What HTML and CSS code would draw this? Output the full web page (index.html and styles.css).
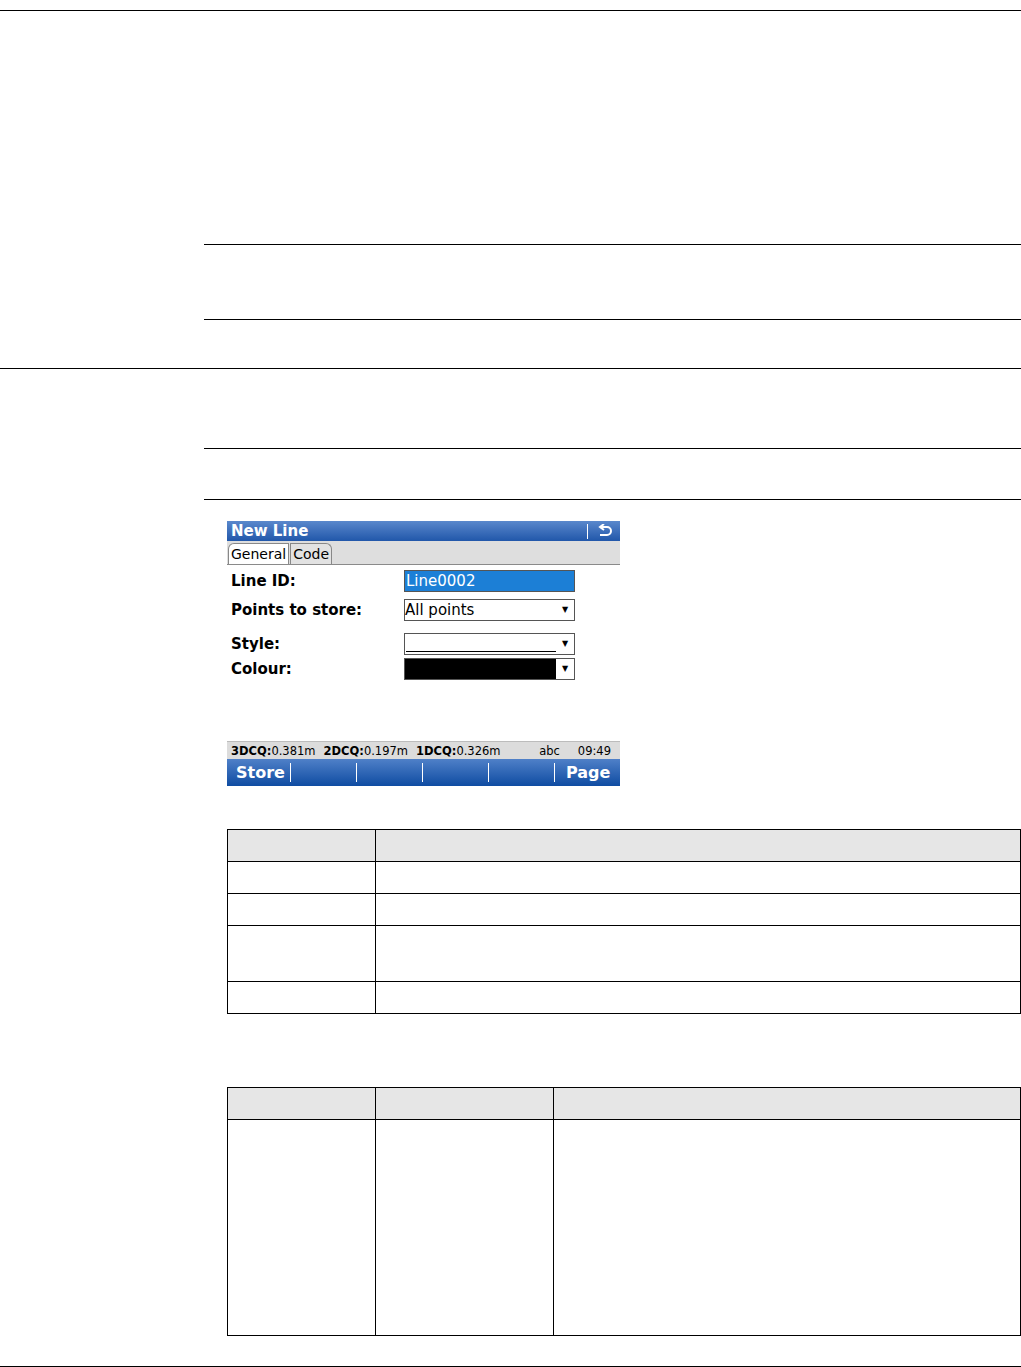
FILE: index.html
```html
<!DOCTYPE html>
<html lang="en">
<head>
  <meta charset="UTF-8" />
  <title>New Line</title>
  <link rel="stylesheet" href="styles.css">
</head>
<body>

<div class="rule full top"></div>
<div class="gap g1"></div>
<div class="rule indent"></div>
<div class="gap g2"></div>
<div class="rule indent"></div>
<div class="gap g3"></div>
<div class="rule full"></div>
<div class="gap g4"></div>
<div class="rule indent"></div>
<div class="gap g5"></div>
<div class="rule indent"></div>

<div class="device">
  <div class="title-bar">
    <span class="title">New Line</span>
    <span class="title-sep"></span>
    <svg class="back-icon" width="16" height="14" viewBox="0 0 16 14">
      <path d="M4 3 H10 A4 4 0 0 1 10 11 H3" fill="none" stroke="#fff" stroke-width="2"/>
      <path d="M7 0 L3 3 L7 6" fill="none" stroke="#fff" stroke-width="2"/>
    </svg>
  </div>
  <div class="tabs">
    <div class="tab active">General</div>
    <div class="tab">Code</div>
  </div>
  <div class="fields">
    <div class="field">
      <label>Line ID:</label>
      <div class="box input">Line0002</div>
    </div>
    <div class="field">
      <label>Points to store:</label>
      <div class="box select"><span class="val">All points</span><span class="arrow">&#9660;</span></div>
    </div>
    <div class="field style-row">
      <label>Style:</label>
      <div class="box select"><span class="val"><span class="line-sample"></span></span><span class="arrow">&#9660;</span></div>
    </div>
    <div class="field colour-row">
      <label>Colour:</label>
      <div class="box select"><span class="val"><span class="colour-sample"></span></span><span class="arrow">&#9660;</span></div>
    </div>
  </div>
  <div class="status-bar">
    <span><b>3DCQ:</b>0.381m</span>
    <span><b>2DCQ:</b>0.197m</span>
    <span><b>1DCQ:</b>0.326m</span>
    <span class="abc">abc</span>
    <span class="time">09:49</span>
  </div>
  <div class="softkeys">
    <div class="key">Store</div>
    <div class="key"></div>
    <div class="key"></div>
    <div class="key"></div>
    <div class="key"></div>
    <div class="key">Page</div>
  </div>
</div>

<table class="grid t1">
  <tr class="head"><td class="c1"></td><td></td></tr>
  <tr><td></td><td></td></tr>
  <tr><td></td><td></td></tr>
  <tr class="tall"><td></td><td></td></tr>
  <tr><td></td><td></td></tr>
</table>

<table class="grid t2">
  <tr class="head"><td class="c1"></td><td class="c2"></td><td></td></tr>
  <tr class="big"><td></td><td></td><td></td></tr>
</table>

<div class="rule full bottom"></div>

</body>
</html>
```

FILE: styles.css
```css
body {
  margin: 0;
  background: #fff;
  font-family: 'DejaVu Sans', sans-serif;
}

.rule {
  height: 0;
  border-top: 1px solid #000;
}

.rule.top {
  margin-top: 10px;
}

.rule.indent {
  margin-left: 204px;
}

.gap.g1 { height: 233px; }
.gap.g2 { height: 74px; }
.gap.g3 { height: 48px; }
.gap.g4 { height: 79px; }
.gap.g5 { height: 50px; }

/* device screen */
.device {
  width: 393px;
  margin: 21px 0 0 227px;
  background: #fff;
  font-family: 'DejaVu Sans', sans-serif;
}

.title-bar {
  height: 20px;
  display: flex;
  align-items: center;
  background: linear-gradient(#5a88cc, #2157aa);
  color: #fff;
}

.title {
  flex: 1;
  padding-left: 4px;
  font-weight: bold;
  font-size: 15px;
}

.title-sep {
  width: 1px;
  height: 15px;
  background: #fff;
  margin-right: 9px;
}

.back-icon {
  margin-right: 7px;
}

.tabs {
  height: 23px;
  background: #dedede;
  border-bottom: 1px solid #8a8a8a;
  display: flex;
  align-items: flex-end;
  padding-left: 1px;
}

.tab {
  height: 20px;
  line-height: 21px;
  font-size: 14px;
  padding: 0 2px;
  border: 1px solid #888;
  border-bottom: none;
  border-radius: 0 6px 0 0;
  background: #e2e2e2;
  margin-left: 1px;
}

.tab.active {
  background: #fff;
  border-radius: 6px 0 0 0;
  margin-left: 0;
}

.fields {
  height: 176px;
  padding-top: 5px;
  box-sizing: border-box;
}

.field {
  display: flex;
  align-items: center;
  height: 22px;
  margin-bottom: 7px;
}

.field.style-row {
  margin-top: 12px;
  margin-bottom: 3px;
}

.field label {
  width: 173px;
  padding-left: 4px;
  font-weight: bold;
  font-size: 15px;
}

.box {
  width: 169px;
  height: 20px;
  border: 1px solid #555;
  font-size: 15px;
  line-height: 20px;
  display: flex;
}

.box.input {
  background: #1c7fd6;
  color: #fff;
  padding-left: 1px;
  width: 168px;
}

.select .val {
  flex: 1;
  position: relative;
}

.select .arrow {
  width: 18px;
  font-size: 8px;
  text-align: center;
  line-height: 20px;
}

.line-sample {
  position: absolute;
  left: 1px;
  right: 0;
  bottom: 2px;
  border-top: 1px solid #000;
}

.colour-sample {
  display: block;
  height: 100%;
  background: #000;
}

.status-bar {
  height: 17px;
  background: #dcdcdc;
  border-top: 1px solid #bcbcbc;
  display: flex;
  align-items: center;
  font-size: 11.5px;
  padding-left: 4px;
  gap: 8px;
}

.status-bar .abc {
  margin-left: auto;
}

.status-bar .time {
  margin-left: 10px;
  margin-right: 9px;
}

.softkeys {
  height: 27px;
  background: linear-gradient(#4f80c8, #0f4ca2);
  display: flex;
  color: #fff;
  font-weight: bold;
  font-size: 16px;
}

.key {
  flex: 1;
  display: flex;
  align-items: center;
  padding-left: 9px;
  margin: 4px 0;
}

.key + .key {
  border-left: 1px solid #fff;
  padding-left: 11px;
}

/* tables */
.grid {
  border-collapse: collapse;
  margin-left: 227px;
  width: 794px;
}

.grid td {
  border: 1px solid #000;
  height: 31px;
  padding: 0;
}

.grid .head td {
  background: #e6e6e6;
}

.t1 {
  margin-top: 43px;
}

.t1 .c1 {
  width: 147px;
}

.t1 .tall td {
  height: 55px;
}

.t2 {
  margin-top: 73px;
}

.t2 .c1 {
  width: 147px;
}

.t2 .c2 {
  width: 177px;
}

.t2 .big td {
  height: 215px;
}

.rule.bottom {
  margin-top: 30px;
}
```
